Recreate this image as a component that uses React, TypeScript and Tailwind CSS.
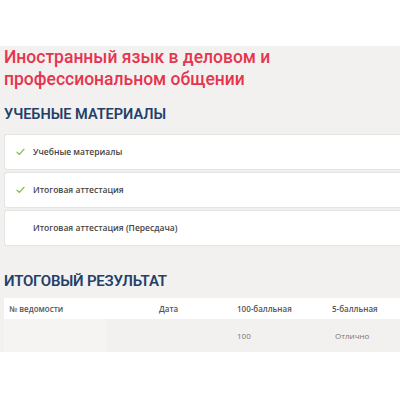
import React from "react";

const Check = () => (
  <svg width="9" height="8" viewBox="0 0 9 8" className="shrink-0">
    <path d="M1 4.2 L3.4 6.4 L8 1.2" fill="none" stroke="#8cc152" strokeWidth="1.3" strokeLinecap="round" strokeLinejoin="round" />
  </svg>
);

export default function App() {
  const items = [
    { t: "Учебные материалы", c: true },
    { t: "Итоговая аттестация", c: true },
    { t: "Итоговая аттестация (Пересдача)", c: false },
  ];
  return (
    <div className="w-[400px] h-[400px] bg-white overflow-hidden" style={{ fontFamily: "'Open Sans', sans-serif" }}>
      <div className="h-[46px]" />
      <div className="bg-[#f2f1ef] pl-[4px]">
        <h1 className="text-[17.5px] leading-[22px] font-medium text-[#e5354f]" style={{ fontFamily: "Roboto, sans-serif" }}>
          Иностранный язык в деловом и<br />профессиональном общении
        </h1>
        <h2 className="mt-[16px] text-[14.5px] leading-[18px] font-semibold text-[#23406a] uppercase" style={{ fontFamily: "Roboto, sans-serif" }}>
          Учебные материалы
        </h2>
        <div className="mt-[10px] flex flex-col gap-[2px]">
          {items.map((it) => (
            <div key={it.t} className="h-[36px] bg-white border border-[#e4e4e2] rounded-l-[3px] border-r-0 flex items-center pl-[11px]">
              <div className="w-[17px] flex items-center">{it.c && <Check />}</div>
              <span className="text-[8.5px] font-semibold text-[#444]">{it.t}</span>
            </div>
          ))}
        </div>
        <h2 className="mt-[25px] text-[15px] leading-[20px] font-semibold text-[#23406a] uppercase tracking-[-0.2px]" style={{ fontFamily: "Roboto, sans-serif" }}>
          Итоговый результат
        </h2>
        <div className="mt-[7px] h-[21px] bg-white flex items-center text-[8px] font-semibold text-[#555]">
          <div className="w-[155px] pl-[5px]">№ ведомости</div>
          <div className="w-[78px]">Дата</div>
          <div className="w-[95px]">100-балльная</div>
          <div>5-балльная</div>
        </div>
        <div className="h-[33px] flex items-center text-[8px] text-[#777]">
          <div className="w-[102px] h-full bg-[#f5f4f2]" />
          <div className="w-[131px]" />
          <div className="w-[98px]">100</div>
          <div>Отлично</div>
        </div>
      </div>
    </div>
  );
}
